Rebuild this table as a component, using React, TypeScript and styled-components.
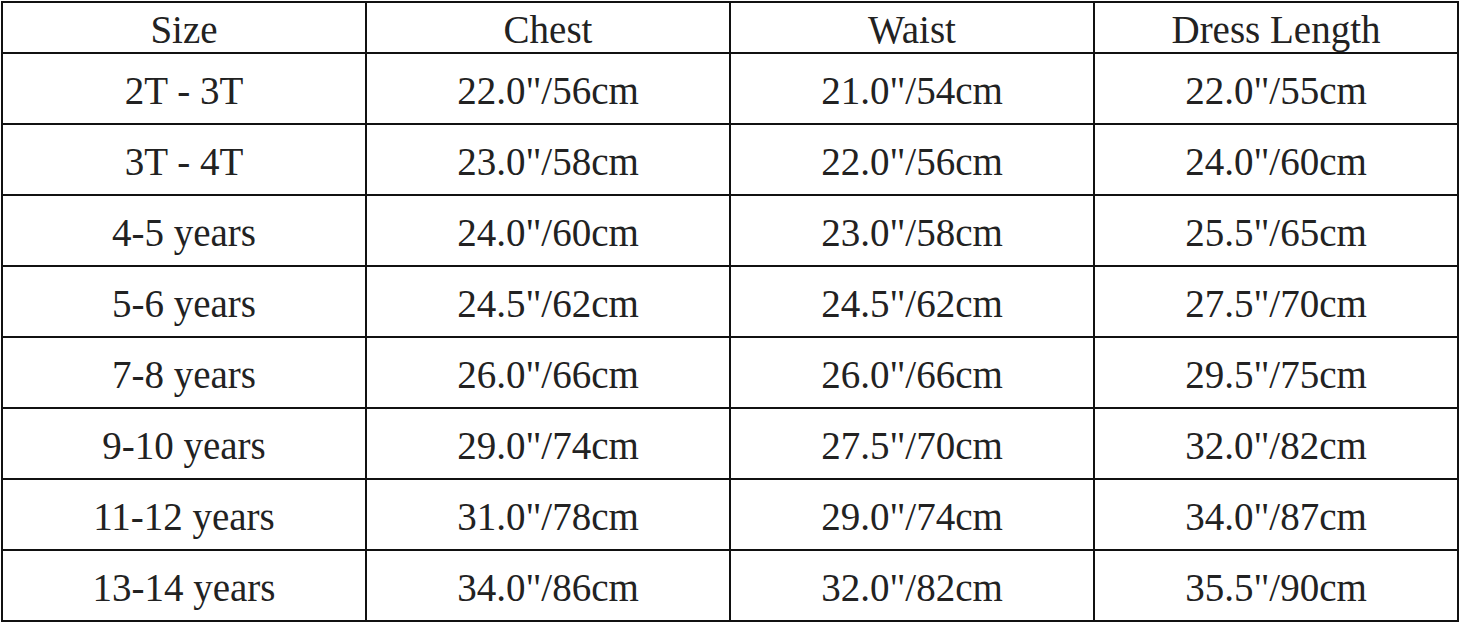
import React from "react";
import styled, { createGlobalStyle } from "styled-components";

const GlobalStyle = createGlobalStyle`
  html, body {
    margin: 0;
    padding: 0;
    background: #ffffff;
  }
`;

const Page = styled.div`
  padding: 1px 0 0 1px;
`;

const Table = styled.table`
  border-collapse: collapse;
  width: 1458px;
  table-layout: fixed;
  font-family: "Liberation Serif", "Times New Roman", serif;
  color: #222;
`;

const HeadCell = styled.th`
  border: 2px solid #111;
  height: 45px;
  padding: 4px 0 0;
  font-weight: normal;
  font-size: 39px;
  line-height: 1;
  text-align: center;
  vertical-align: middle;
`;

const Cell = styled.td`
  border: 2px solid #111;
  height: 65px;
  padding: 4px 0 0;
  font-size: 39px;
  line-height: 1;
  text-align: center;
  vertical-align: middle;
`;

const headers = ["Size", "Chest", "Waist", "Dress Length"];

const rows = [
  ["2T - 3T", "22.0\"/56cm", "21.0\"/54cm", "22.0\"/55cm"],
  ["3T - 4T", "23.0\"/58cm", "22.0\"/56cm", "24.0\"/60cm"],
  ["4-5 years", "24.0\"/60cm", "23.0\"/58cm", "25.5\"/65cm"],
  ["5-6 years", "24.5\"/62cm", "24.5\"/62cm", "27.5\"/70cm"],
  ["7-8 years", "26.0\"/66cm", "26.0\"/66cm", "29.5\"/75cm"],
  ["9-10 years", "29.0\"/74cm", "27.5\"/70cm", "32.0\"/82cm"],
  ["11-12 years", "31.0\"/78cm", "29.0\"/74cm", "34.0\"/87cm"],
  ["13-14 years", "34.0\"/86cm", "32.0\"/82cm", "35.5\"/90cm"],
];

export default function App() {
  return (
    <>
      <GlobalStyle />
      <Page>
        <Table>
          <thead>
            <tr>
              {headers.map((h) => (
                <HeadCell key={h}>{h}</HeadCell>
              ))}
            </tr>
          </thead>
          <tbody>
            {rows.map((r) => (
              <tr key={r[0]}>
                {r.map((c, i) => (
                  <Cell key={i}>{c}</Cell>
                ))}
              </tr>
            ))}
          </tbody>
        </Table>
      </Page>
    </>
  );
}
